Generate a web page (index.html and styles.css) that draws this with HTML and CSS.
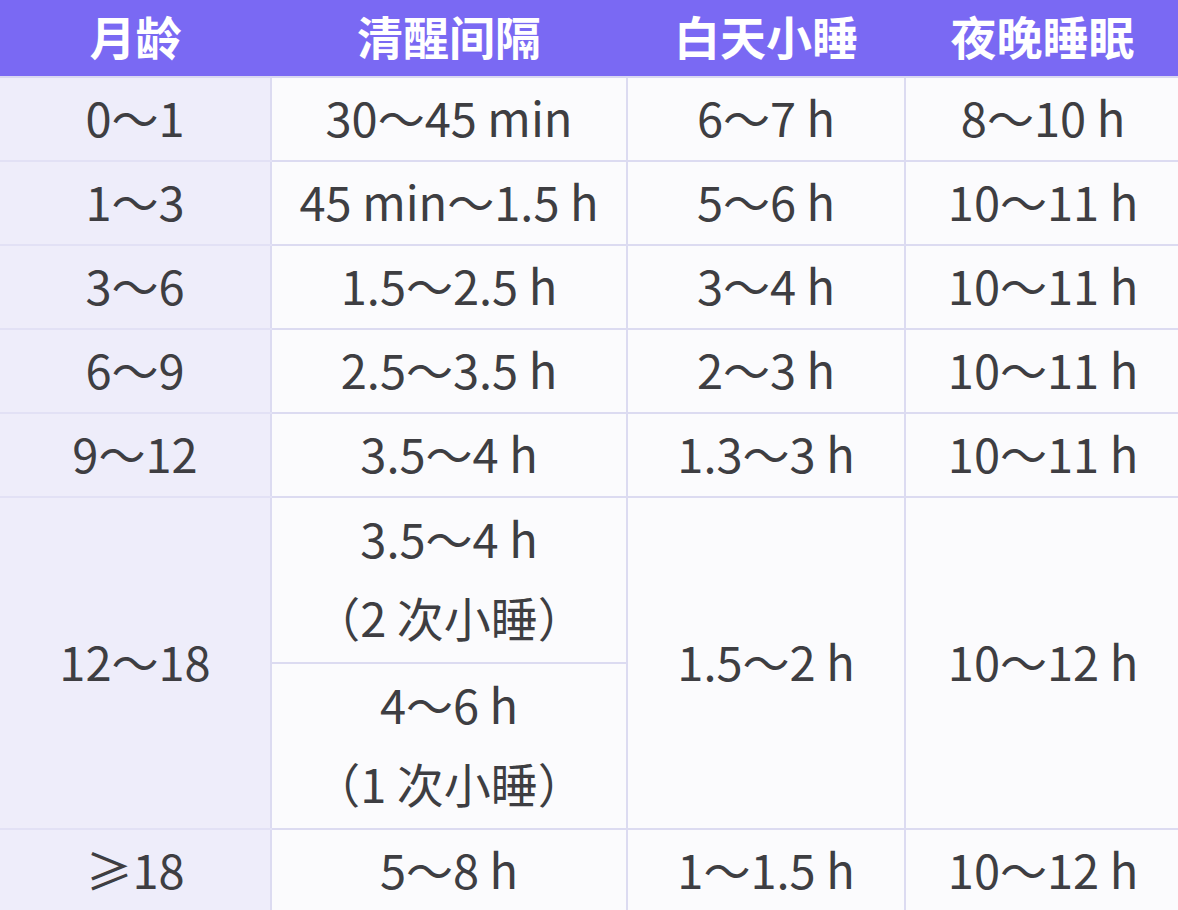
FILE: index.html
```html
<!DOCTYPE html>
<html lang="zh">
<head>
<meta charset="utf-8">
<link rel="stylesheet" href="styles.css">
</head>
<body>
<table class="sleep">
  <colgroup>
    <col class="c1"><col class="c2"><col class="c3"><col class="c4">
  </colgroup>
  <thead>
    <tr><th>月龄</th><th>清醒间隔</th><th>白天小睡</th><th>夜晚睡眠</th></tr>
  </thead>
  <tbody>
    <tr><td class="age">0～1</td><td>30～45 min</td><td>6～7 h</td><td>8～10 h</td></tr>
    <tr><td class="age">1～3</td><td>45 min～1.5 h</td><td>5～6 h</td><td>10～11 h</td></tr>
    <tr><td class="age">3～6</td><td>1.5～2.5 h</td><td>3～4 h</td><td>10～11 h</td></tr>
    <tr><td class="age">6～9</td><td>2.5～3.5 h</td><td>2～3 h</td><td>10～11 h</td></tr>
    <tr><td class="age">9～12</td><td>3.5～4 h</td><td>1.3～3 h</td><td>10～11 h</td></tr>
    <tr class="tall"><td class="age" rowspan="2">12～18</td><td class="split"><div class="line">3.5～4 h</div><div class="line">（2 次小睡）</div></td><td rowspan="2">1.5～2 h</td><td rowspan="2">10～12 h</td></tr>
    <tr class="tall"><td class="split"><div class="line">4～6 h</div><div class="line">（1 次小睡）</div></td></tr>
    <tr><td class="age">≥18</td><td>5～8 h</td><td>1～1.5 h</td><td>10～12 h</td></tr>
  </tbody>
</table>
</body>
</html>
```
FILE: styles.css
```css
html, body {
  margin: 0;
  padding: 0;
  background: #fbfbfd;
  overflow: hidden;
}
.sleep {
  border-collapse: collapse;
  table-layout: fixed;
  width: 1180px;
  font-family: "Noto Sans CJK SC", "Noto Sans", sans-serif;
  color: #3e3e42;
}
.c1 { width: 271px; }
.c2 { width: 356px; }
.c3 { width: 278px; }
.c4 { width: 275px; }
.sleep th {
  background: #7a69f3;
  color: #ffffff;
  font-size: 46px;
  font-weight: 700;
  height: 70px;
  padding: 0 0 6px;
  line-height: 46px;
  text-align: center;
  border: none;
  border-bottom: 2px solid #d9d8f1;
}
.sleep td {
  height: 76px;
  padding: 0 0 6px;
  text-align: center;
  vertical-align: middle;
  font-size: 47px;
  line-height: 1;
  border: 2px solid #dcdbf1;
  background: #fbfbfd;
}
.sleep td.age {
  background: #eeedfa;
  border-left: none;
  border-color: #e2e1f5;
  border-right: 2px solid #dcdbf1;
}
.sleep tr.tall td { height: 158px; }
.sleep td.split { padding: 0 0 6px; }
.sleep .line {
  height: 79px;
  line-height: 79px;
}
.sleep td:last-child { border-right: none; }
```
